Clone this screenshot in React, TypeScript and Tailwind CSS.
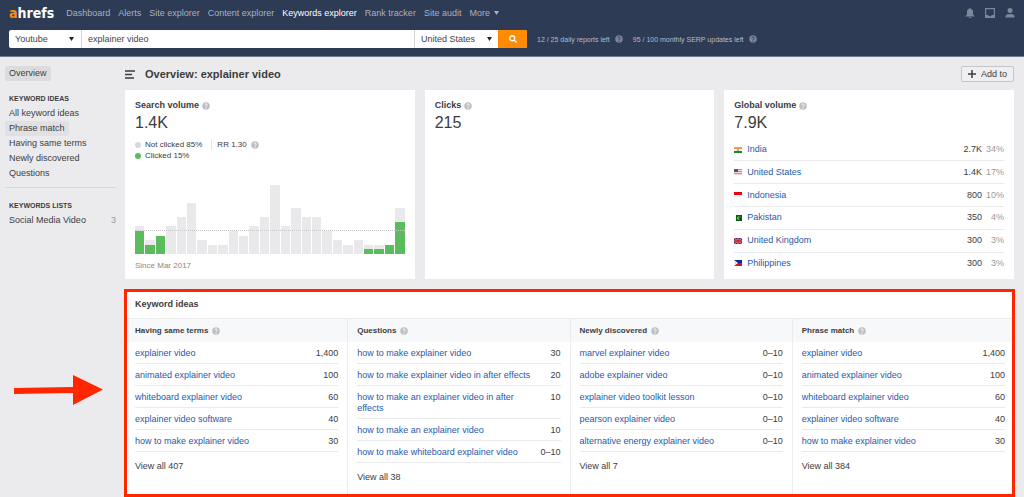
import React, { useState } from 'react';

interface KeywordRow {
  term: string;
  volume: string;
}

interface IdeaGroup {
  title: string;
  rows: KeywordRow[];
  total: number;
}

const navItems = [
  'Dashboard',
  'Alerts',
  'Site explorer',
  'Content explorer',
  'Keywords explorer',
  'Rank tracker',
  'Site audit',
];

const sidebarIdeas = ['All keyword ideas', 'Phrase match', 'Having same terms', 'Newly discovered', 'Questions'];

// [total searches, clicked searches] per month
const monthly: [number, number][] = [
  [6, 5], [3, 2], [4, 4], [6, 0], [8, 0], [11, 0], [3, 0], [2, 0], [2, 0],
  [5, 0], [4, 0], [6, 0], [8, 0], [15, 0], [6, 0], [10, 0], [8, 0], [8, 0],
  [5, 0], [3, 0], [2, 0], [3, 0], [2, 1], [2, 1], [2, 2], [10, 7],
];
const MAX_MONTHLY = 15;

const countries = [
  { code: 'in', name: 'India', volume: '2.7K', share: '34%' },
  { code: 'us', name: 'United States', volume: '1.4K', share: '17%' },
  { code: 'id', name: 'Indonesia', volume: '800', share: '10%' },
  { code: 'pk', name: 'Pakistan', volume: '350', share: '4%' },
  { code: 'gb', name: 'United Kingdom', volume: '300', share: '3%' },
  { code: 'ph', name: 'Philippines', volume: '300', share: '3%' },
];

const commonRows: KeywordRow[] = [
  { term: 'explainer video', volume: '1,400' },
  { term: 'animated explainer video', volume: '100' },
  { term: 'whiteboard explainer video', volume: '60' },
  { term: 'explainer video software', volume: '40' },
  { term: 'how to make explainer video', volume: '30' },
];

const ideaGroups: IdeaGroup[] = [
  { title: 'Having same terms', rows: commonRows, total: 407 },
  {
    title: 'Questions',
    rows: [
      { term: 'how to make explainer video', volume: '30' },
      { term: 'how to make explainer video in after effects', volume: '20' },
      { term: 'how to make an explainer video in after effects', volume: '10' },
      { term: 'how to make an explainer video', volume: '10' },
      { term: 'how to make whiteboard explainer video', volume: '0–10' },
    ],
    total: 38,
  },
  {
    title: 'Newly discovered',
    rows: [
      { term: 'marvel explainer video', volume: '0–10' },
      { term: 'adobe explainer video', volume: '0–10' },
      { term: 'explainer video toolkit lesson', volume: '0–10' },
      { term: 'pearson explainer video', volume: '0–10' },
      { term: 'alternative energy explainer video', volume: '0–10' },
    ],
    total: 7,
  },
  { title: 'Phrase match', rows: commonRows, total: 384 },
];

function HelpIcon({ dark }: { dark?: boolean }) {
  return (
    <svg
      viewBox="0 0 16 16"
      className={dark ? 'size-[8px] shrink-0 text-[#7a8496]' : 'size-[8px] shrink-0 text-[#bfbfc1]'}
      aria-hidden="true"
    >
      <circle cx="8" cy="8" r="7.500" fill="currentColor" />
      <path
        d="M5.600 6.200a2.400 2.400 0 1 1 3.600 2.100C8.400 8.800 8 9.100 8 10"
        fill="none"
        stroke={dark ? '#2d3b55' : '#fff'}
        strokeWidth="1.800"
      />
      <circle cx="8" cy="12.300" r="1.100" fill={dark ? '#2d3b55' : '#fff'} />
    </svg>
  );
}

function Caret({ className }: { className: string }) {
  return (
    <svg viewBox="0 0 10 8" className={className} aria-hidden="true">
      <path d="M0 0h10L5 8z" fill="currentColor" />
    </svg>
  );
}

function Flag({ code }: { code: string }) {
  return (
    <svg viewBox="0 0 24 18" className="block h-[6px] w-[8px]" aria-hidden="true">
      {code === 'in' && (
        <>
          <path d="M0 0h24v6H0z" fill="#f79a3a" />
          <path d="M0 6h24v6H0z" fill="#f4f4f8" />
          <path d="M0 12h24v6H0z" fill="#168a1c" />
          <circle cx="12" cy="9" r="2.500" fill="#4a4ea8" />
        </>
      )}
      {code === 'us' && (
        <>
          <path d="M0 0h24v18H0z" fill="#f0d4d6" />
          <path d="M0 1.500h24M0 7.500h24M0 13.500h24" stroke="#dc8f96" strokeWidth="3" />
          <path d="M0 0h12v9H0z" fill="#4a5680" />
        </>
      )}
      {code === 'id' && (
        <>
          <path d="M0 0h24v9H0z" fill="#f00015" />
          <path d="M0 9h24v9H0z" fill="#fafafa" />
        </>
      )}
      {code === 'pk' && (
        <>
          <path d="M0 0h6v18H0z" fill="#f6f6f6" />
          <path d="M6 0h18v18H6z" fill="#0b5a12" />
          <path d="M17 12.500a4.500 4.500 0 1 1-1-7.500 3.600 3.600 0 1 0 1 7.500z" fill="#cfe0d0" />
          <circle cx="18" cy="6" r="1.300" fill="#fff" />
        </>
      )}
      {code === 'gb' && (
        <>
          <path d="M0 0h24v18H0z" fill="#1c2c80" />
          <path d="M0 0l24 18M24 0L0 18" stroke="#e8d5dc" strokeWidth="3" />
          <path d="M0 0l24 18M24 0L0 18" stroke="#d8202e" strokeWidth="1.500" />
          <path d="M12 0v18M0 9h24" stroke="#f3dfe2" strokeWidth="5" />
          <path d="M12 0v18M0 9h24" stroke="#d8101f" strokeWidth="4" />
        </>
      )}
      {code === 'ph' && (
        <>
          <path d="M0 0h24v9H0z" fill="#0a2ba0" />
          <path d="M0 9h24v9H0z" fill="#e00b22" />
          <path d="M0 0l12 9L0 18z" fill="#fff" />
          <circle cx="4.500" cy="9" r="2" fill="#f0b63a" />
        </>
      )}
    </svg>
  );
}

function Header() {
  const [query, setQuery] = useState('explainer video');

  return (
    <header className="border-b border-[#6f7a8f] bg-[#2d3b55] px-[9px] pb-[8px]">
      <div className="flex h-[26px] items-center">
        <a
          href="#"
          className="mr-[12px] font-['DejaVu_Sans_Condensed','DejaVu_Sans',sans-serif] text-[14px] leading-[16px] font-bold text-white"
        >
          <span className="text-[#ff8c0a]">a</span>hrefs
        </a>
        <nav className="flex items-center gap-[8px] text-[#a9b1bf]">
          {navItems.map((item) => (
            <a key={item} href="#" className={item === 'Keywords explorer' ? 'text-white' : ''}>
              {item}
            </a>
          ))}
          <button type="button" className="flex items-center gap-[4px]">
            More
            <Caret className="h-[4px] w-[5px]" />
          </button>
        </nav>
        <div className="ml-auto flex items-center gap-[10px] text-[#7d8797]">
          <button type="button" aria-label="Notifications">
            <svg viewBox="0 0 20 20" className="size-[10px]" fill="currentColor">
              <path d="M10 0a1.500 1.500 0 0 0-1.500 1.700C5.800 2.400 4 4.500 4 7.500V13l-3 3v1h18v-1l-3-3V7.500c0-3-1.800-5.100-4.500-5.800A1.500 1.500 0 0 0 10 0z" />
              <path d="M7.500 18h5a2.500 2 0 0 1-5 0z" />
            </svg>
          </button>
          <button type="button" aria-label="Inbox">
            <svg viewBox="0 0 20 20" className="size-[10px]">
              <path d="M1.200 1.200h17.600v17.600H1.200z" fill="none" stroke="currentColor" strokeWidth="2.400" />
              <path d="M1 14h5.500c.4 1.500 1.700 2.500 3.500 2.500s3.100-1 3.500-2.500H19v5H1z" fill="currentColor" />
            </svg>
          </button>
          <button type="button" aria-label="Account">
            <svg viewBox="0 0 20 20" className="size-[10px]" fill="currentColor">
              <circle cx="10" cy="5" r="5" />
              <path d="M1 19v-3c0-2.500 4.500-4 9-4s9 1.500 9 4v3z" />
            </svg>
          </button>
        </div>
      </div>
      <div className="mt-[4px] flex items-center">
        <form
          className="flex h-[18px] w-[518px] overflow-hidden rounded-[2px] bg-white text-[#444]"
          onSubmit={(e) => e.preventDefault()}
        >
          <div className="relative w-[73px] border-r border-[#d4d6da]">
            <select aria-label="Search engine" className="size-full appearance-none pl-[6px]" defaultValue="Youtube">
              <option>Youtube</option>
              <option>Google</option>
            </select>
            <Caret className="pointer-events-none absolute top-[7px] right-[7px] h-[4px] w-[5px] text-[#222]" />
          </div>
          <input
            type="text"
            aria-label="Keyword"
            value={query}
            onChange={(e) => setQuery(e.target.value)}
            className="min-w-0 flex-1 px-[6px] outline-none"
          />
          <div className="relative w-[84px] border-l border-[#d4d6da]">
            <select aria-label="Country" className="size-full appearance-none pl-[6px]" defaultValue="United States">
              <option>United States</option>
              <option>India</option>
            </select>
            <Caret className="pointer-events-none absolute top-[7px] right-[6px] h-[4px] w-[5px] text-[#222]" />
          </div>
          <button
            type="submit"
            aria-label="Search"
            className="flex w-[29px] items-center justify-center bg-[#ff8b00] text-white"
          >
            <svg viewBox="0 0 16 16" className="size-[8px]" fill="none" stroke="currentColor" strokeWidth="2.600">
              <circle cx="6.500" cy="6.500" r="5" />
              <path d="M10.300 10.300l5 5" />
            </svg>
          </button>
        </form>
        <p className="ml-[10px] flex items-center gap-[5px] text-[7px] text-[#b4bcc8]">
          12 / 25 daily reports left
          <HelpIcon dark />
        </p>
        <p className="ml-[10px] flex items-center gap-[5px] text-[7px] text-[#b4bcc8]">
          95 / 100 monthly SERP updates left
          <HelpIcon dark />
        </p>
      </div>
    </header>
  );
}

function Sidebar() {
  return (
    <aside className="w-[111px] shrink-0">
      <a href="#" className="inline-block rounded-[2px] bg-[#dcdcdf] px-[4px] py-[2px]">
        Overview
      </a>
      <h2 className="mt-[12px] px-[4px] text-[7px] font-bold">KEYWORD IDEAS</h2>
      <ul className="mt-[2px]">
        {sidebarIdeas.map((item) => (
          <li key={item} className="flex">
            <a
              href="#"
              className={
                item === 'Phrase match' ? 'rounded-[2px] bg-[#e1e1e4] px-[4px] py-[2px]' : 'px-[4px] py-[2px]'
              }
            >
              {item}
            </a>
          </li>
        ))}
      </ul>
      <hr className="mt-[6px] border-[#d8d8da]" />
      <h2 className="mt-[12px] px-[4px] text-[7px] font-bold">KEYWORDS LISTS</h2>
      <a href="#" className="mt-[4px] flex justify-between pl-[4px]">
        Social Media Video
        <span className="text-[#999]">3</span>
      </a>
    </aside>
  );
}

function CardTitle({ title, value }: { title: string; value: string }) {
  return (
    <>
      <h2 className="flex items-center gap-[3px] font-bold">
        {title}
        <HelpIcon />
      </h2>
      <p className="mt-[2px] text-[16px] leading-[20px]">{value}</p>
    </>
  );
}

function SearchVolumeCard() {
  return (
    <section className="bg-white px-[10px] pt-[10px] pb-[8px]">
      <CardTitle title="Search volume" value="1.4K" />
      <div className="mt-[6px] flex text-[8px]">
        <ul>
          <li className="flex items-center gap-[4px]">
            <span className="size-[6px] rounded-full bg-[#d8d8da]" />
            Not clicked 85%
          </li>
          <li className="flex items-center gap-[4px]">
            <span className="size-[6px] rounded-full bg-[#5cbb5c]" />
            Clicked 15%
          </li>
        </ul>
        <p className="ml-[9px] flex h-[11px] items-center gap-[4px] border-l border-[#e4e4e6] pl-[5px]">
          RR 1.30
          <HelpIcon />
        </p>
      </div>
      <div className="relative mt-[24px] flex h-[69px] items-end gap-px">
        {monthly.map(([total, clicked], i) => (
          <div
            key={i}
            className="flex flex-1 items-end bg-[#e9e9eb]"
            style={{ height: `${(total / MAX_MONTHLY) * 100}%` }}
          >
            <div className="w-full bg-[#5cbb5c]" style={{ height: `${(clicked / total) * 100}%` }} />
          </div>
        ))}
        <div className="absolute inset-x-0 bottom-1/3 border-t border-dotted border-[#c6c6c8]" />
      </div>
      <p className="mt-[6px] text-[8px] text-[#888]">Since Mar 2017</p>
    </section>
  );
}

function GlobalVolumeCard() {
  return (
    <section className="bg-white px-[10px] pt-[10px]">
      <CardTitle title="Global volume" value="7.9K" />
      <table className="mt-[6px] h-[135px] w-full">
        <tbody>
          {countries.map((c) => (
            <tr key={c.code} className="border-b border-[#eaeaec] last:border-0">
              <td className="w-[13px] p-0">
                <Flag code={c.code} />
              </td>
              <td className="p-0">
                <a href="#" className="text-[#1f59ab]">
                  {c.name}
                </a>
              </td>
              <td className="p-0 text-right">{c.volume}</td>
              <td className="w-[22px] p-0 text-right text-[#999]">{c.share}</td>
            </tr>
          ))}
        </tbody>
      </table>
    </section>
  );
}

function IdeaColumn({ group }: { group: IdeaGroup }) {
  return (
    <div className="border-l border-[#ececee] pb-[13px] first:border-transparent">
      <h3 className="flex h-[23px] items-center gap-[4px] bg-[#f7f8f9] px-[9px] text-[8px] font-bold">
        {group.title}
        <HelpIcon />
      </h3>
      <div className="px-[9px]">
        <table className="w-full">
          <tbody>
            {group.rows.map((row) => (
              <tr key={row.term} className="border-b border-[#eaeaec] align-top">
                <td className="px-0 pt-[6px] pb-[4px]">
                  <a href="#" className="text-[#1f59ab]">
                    {row.term}
                  </a>
                </td>
                <td className="pt-[6px] pr-0 pb-[4px] pl-[10px] text-right whitespace-nowrap">{row.volume}</td>
              </tr>
            ))}
          </tbody>
        </table>
        <a href="#" className="mt-[9px] block">
          View all {group.total}
        </a>
      </div>
    </div>
  );
}

export default function App() {
  return (
    <div className="relative min-h-screen bg-[#ebebed] font-['Liberation_Sans',Arial,sans-serif] text-[9px] leading-[11px] text-[#3c3c3e]">
      <Header />
      <div className="flex gap-[9px] pt-[9px] pr-[10px] pl-[5px]">
        <Sidebar />
        <main className="min-w-0 flex-1">
          <div className="flex h-[16px] items-center">
            <button type="button" aria-label="Toggle menu">
              <svg viewBox="0 0 10 9" className="h-[9px] w-[10px]" stroke="currentColor" strokeWidth="1.500">
                <path d="M0 1h10M0 4.500h7M0 8h9" />
              </svg>
            </button>
            <h1 className="ml-[10px] text-[11px] font-bold">Overview: explainer video</h1>
            <button
              type="button"
              className="ml-auto flex h-[16px] items-center gap-[5px] rounded-[2px] border border-[#c6c6c9] bg-[#efeff1] px-[6px]"
            >
              <svg viewBox="0 0 8 8" className="size-[8px]" stroke="currentColor" strokeWidth="1.500">
                <path d="M4 0v8M0 4h8" />
              </svg>
              Add to
            </button>
          </div>
          <div className="mt-[8px] grid grid-cols-3 gap-[10px]">
            <SearchVolumeCard />
            <section className="bg-white px-[10px] pt-[10px]">
              <CardTitle title="Clicks" value="215" />
            </section>
            <GlobalVolumeCard />
          </div>
          <section className="relative mt-[11px] bg-white">
            <h2 className="flex h-[29px] items-center border-b border-[#ececee] px-[10px] font-bold">
              Keyword ideas
            </h2>
            <div className="grid grid-cols-4">
              {ideaGroups.map((group) => (
                <IdeaColumn key={group.title} group={group} />
              ))}
            </div>
            <div className="pointer-events-none absolute -inset-px border-[3px] border-[#ff2600]" />
          </section>
        </main>
      </div>
      <svg viewBox="0 0 89 30" className="absolute top-[375px] left-[14px] h-[30px] w-[89px]" aria-hidden="true">
        <path d="M0 13l59-1V0l30 14.500L59 30V18L0 19z" fill="#ff2600" />
      </svg>
    </div>
  );
}
